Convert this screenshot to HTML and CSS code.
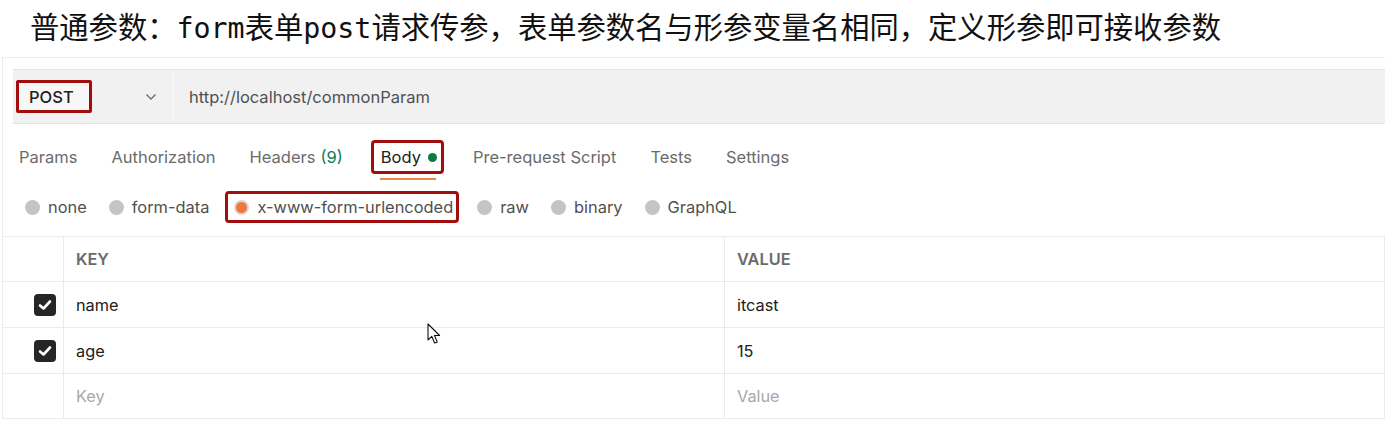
FILE: index.html
```html
<!DOCTYPE html>
<html lang="zh-CN">
<head>
<meta charset="utf-8">
<title>普通参数</title>
<link rel="stylesheet" href="styles.css">
</head>
<body>
<h1 class="title">普通参数：<span class="code">form</span>表单<span class="code">post</span>请求传参，表单参数名与形参变量名相同，定义形参即可接收参数</h1>
<div class="panel">
  <div class="urlbar">
    <div class="method">
      <span class="method-name">POST</span>
      <svg class="chevron" width="12" height="8" viewBox="0 0 12 8"><path d="M1.5 1.5 L6 6 L10.5 1.5" fill="none" stroke="#6b6b6b" stroke-width="1.3"/></svg>
    </div>
    <div class="url">http://localhost/commonParam</div>
  </div>
  <div class="tabs">
    <span class="tab">Params</span>
    <span class="tab">Authorization</span>
    <span class="tab">Headers <span class="count">(9)</span></span>
    <span class="tab tab-active">Body <span class="dot"></span></span>
    <span class="tab">Pre-request Script</span>
    <span class="tab">Tests</span>
    <span class="tab">Settings</span>
  </div>
  <div class="radios">
    <span class="radio"><span class="circle"></span>none</span>
    <span class="radio"><span class="circle"></span>form-data</span>
    <span class="radio radio-on"><span class="circle"></span>x-www-form-urlencoded</span>
    <span class="radio"><span class="circle"></span>raw</span>
    <span class="radio"><span class="circle"></span>binary</span>
    <span class="radio"><span class="circle"></span>GraphQL</span>
  </div>
  <div class="table">
    <div class="row row-head">
      <div class="cell cell-check"></div>
      <div class="cell">KEY</div>
      <div class="cell">VALUE</div>
    </div>
    <div class="row">
      <div class="cell cell-check"><span class="checkbox"><svg width="14" height="12" viewBox="0 0 14 12"><path d="M2 6.5 L5.5 9.5 L12 2.5" fill="none" stroke="#fff" stroke-width="2.6" stroke-linecap="round" stroke-linejoin="round"/></svg></span></div>
      <div class="cell">name</div>
      <div class="cell">itcast</div>
    </div>
    <div class="row">
      <div class="cell cell-check"><span class="checkbox"><svg width="14" height="12" viewBox="0 0 14 12"><path d="M2 6.5 L5.5 9.5 L12 2.5" fill="none" stroke="#fff" stroke-width="2.6" stroke-linecap="round" stroke-linejoin="round"/></svg></span></div>
      <div class="cell">age</div>
      <div class="cell">15</div>
    </div>
    <div class="row row-last">
      <div class="cell cell-check"></div>
      <div class="cell placeholder">Key</div>
      <div class="cell placeholder">Value</div>
    </div>
  </div>
</div>
<svg class="cursor" width="14" height="22" viewBox="0 0 14 22"><path d="M1 1 L1 17 L4.8 13.4 L7.6 20 L10.2 18.9 L7.5 12.5 L12.6 12.5 Z" fill="#fff" stroke="#111" stroke-width="1.1" stroke-linejoin="round"/></svg>
</body>
</html>
```

FILE: styles.css
```css
* { box-sizing: border-box; }

body {
  margin: 0;
  background: #fff;
  font-family: Inter, "Noto Sans", sans-serif;
  color: #212121;
  position: relative;
  width: 1393px;
  height: 433px;
  overflow: hidden;
}

.title {
  margin: 0;
  padding: 7px 0 14px 30px;
  height: 57px;
  font-family: "Noto Sans CJK SC", "Noto Sans", sans-serif;
  font-weight: 400;
  font-size: 29.3px;
  line-height: 36px;
  color: #111;
  white-space: nowrap;
}

.title .code {
  font-family: "DejaVu Sans Mono", "Liberation Mono", monospace;
  font-size: 28.3px;
}

.panel {
  margin-left: 2px;
  width: 1383px;
  border-top: 1px solid #ebebeb;
  border-left: 1px solid #ebebeb;
}

.urlbar {
  margin: 11px 0 0 10px;
  height: 55px;
  background: #f1f1f1;
  border-top: 1px solid #e4e4e4;
  border-bottom: 1px solid #e4e4e4;
  display: flex;
  align-items: center;
  font-size: 16.5px;
}

.method {
  width: 161px;
  height: 100%;
  display: flex;
  align-items: center;
  padding-left: 3px;
  border-right: 1px solid #f9f9f9;
}

.method-name {
  width: 76px;
  height: 33px;
  border: 3px solid #a20d0d;
  border-radius: 2px;
  background: #f7f7f7;
  display: flex;
  align-items: center;
  padding-left: 10px;
  font-weight: 500;
  color: #212121;
}

.chevron {
  margin-left: 53px;
}

.url {
  padding-left: 15px;
  color: #505050;
}

.tabs {
  display: flex;
  align-items: center;
  gap: 34px;
  padding: 19px 0 0 16px;
  height: 47px;
  font-size: 16.5px;
  color: #6b6b6b;
}

.tab {
  height: 28px;
  display: flex;
  align-items: center;
  gap: 5px;
  white-space: nowrap;
}

.count { color: #0e7c55; }

.tab-active {
  position: relative;
  color: #212121;
  gap: 7px;
  padding: 0 4px 0 7px;
  margin-left: -3px;
  margin-right: -2px;
  outline: 3px solid #a20d0d;
  border-radius: 1px;
}

.tab-active::after {
  content: "";
  position: absolute;
  left: 6px;
  right: 5px;
  bottom: -9px;
  height: 2px;
  background: #ee8445;
}

.dot {
  width: 9px;
  height: 9px;
  border-radius: 50%;
  background: #0b7a40;
}

.radios {
  display: flex;
  align-items: center;
  gap: 22px;
  margin-top: 23px;
  padding-left: 22px;
  height: 26px;
  font-size: 16.4px;
  color: #505050;
}

.radio {
  display: flex;
  align-items: center;
  gap: 8px;
  height: 26px;
  white-space: nowrap;
}

.circle {
  width: 15px;
  height: 15px;
  border-radius: 50%;
  background: #c4c4c4;
}

.radio-on {
  padding: 0 3px 0 6px;
  margin-left: -3px;
  margin-right: -1px;
  outline: 3px solid #a20d0d;
  border-radius: 1px;
}

.radio-on .circle {
  background: #f0783a;
  border: 2px solid #e3d3cd;
}

.table {
  margin-top: 16px;
  border-top: 1px solid #ebebeb;
  border-right: 1px solid #ebebeb;
  font-size: 16.3px;
}

.row {
  display: grid;
  grid-template-columns: 61px 661px 1fr;
  height: 46px;
  border-bottom: 1px solid #ebebeb;
}

.row-head { height: 45px; }
.row-last { height: 45px; }

.cell {
  display: flex;
  align-items: center;
  padding-left: 12px;
  border-right: 1px solid #ebebeb;
}

.cell:last-child { border-right: 0; }

.row-head .cell {
  font-weight: 600;
  color: #6b6b6b;
}

.cell-check {
  justify-content: flex-end;
  padding: 0 7px 0 0;
}

.checkbox {
  width: 22px;
  height: 22px;
  border-radius: 4px;
  background: #262626;
  display: flex;
  align-items: center;
  justify-content: center;
}

.placeholder { color: #a8a8a8; }

.cursor {
  position: absolute;
  left: 427px;
  top: 323px;
}
```
